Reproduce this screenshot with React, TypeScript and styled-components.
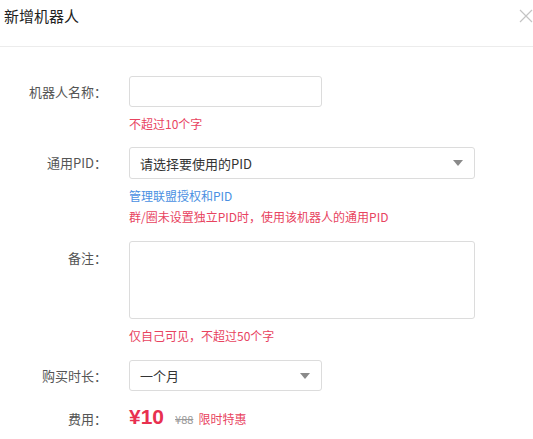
import React from "react";
import styled, { createGlobalStyle } from "styled-components";

const GlobalStyle = createGlobalStyle`
  body {
    margin: 0;
    background: #fff;
    font-family: "Noto Sans CJK SC", "Noto Sans", sans-serif;
    color: #333;
  }
`;

const Dialog = styled.div`
  width: 533px;
  height: 439px;
  overflow: hidden;
  background: #fff;
`;

const Header = styled.div`
  height: 47px;
  display: flex;
  align-items: flex-start;
  justify-content: space-between;
  border-bottom: 1px solid #ececec;
  padding-left: 4px;
  box-sizing: border-box;
`;

const Title = styled.h2`
  margin: 6px 0 0;
  font-size: 15px;
  line-height: 20px;
  font-weight: 400;
  color: #222;
`;

const CloseButton = styled.button`
  border: none;
  background: none;
  padding: 0;
  margin: 9px 0 0;
  width: 15px;
  height: 15px;
  cursor: pointer;
`;

const Body = styled.div`
  padding-top: 29px;
`;

const Field = styled.div<{ $gap: number }>`
  display: grid;
  grid-template-columns: 107px 1fr;
  column-gap: 22px;
  margin-bottom: ${(p) => p.$gap}px;
`;

const Label = styled.div<{ $h: number }>`
  text-align: right;
  font-size: 13px;
  line-height: ${(p) => p.$h}px;
  color: #555;
  white-space: nowrap;
`;

const Control = styled.div`
  display: flex;
  flex-direction: column;
  align-items: flex-start;
`;

const TextInput = styled.input<{ $w: number }>`
  width: ${(p) => p.$w}px;
  height: 31px;
  box-sizing: border-box;
  border: 1px solid #dcdcdc;
  border-radius: 3px;
  outline: none;
  padding: 0 9px;
  font: inherit;
  font-size: 13px;
`;

const TextArea = styled.textarea`
  width: 346px;
  height: 78px;
  box-sizing: border-box;
  border: 1px solid #dcdcdc;
  border-radius: 3px;
  outline: none;
  resize: none;
  padding: 6px 9px;
  font: inherit;
  font-size: 13px;
  display: block;
`;

const Select = styled.div<{ $w: number; $h: number }>`
  width: ${(p) => p.$w}px;
  height: ${(p) => p.$h}px;
  box-sizing: border-box;
  border: 1px solid #dcdcdc;
  border-radius: 3px;
  display: flex;
  align-items: center;
  justify-content: space-between;
  padding: 0 11px 0 10px;
  font-size: 13px;
  color: #333;
`;

const Arrow = styled.span`
  width: 0;
  height: 0;
  border-left: 5px solid transparent;
  border-right: 5px solid transparent;
  border-top: 6px solid #8a8a8a;
`;

const Hint = styled.div<{ $mt: number; $tone?: "red" | "blue" }>`
  margin-top: ${(p) => p.$mt}px;
  font-size: 12px;
  line-height: 18px;
  color: ${(p) => (p.$tone === "blue" ? "#4a90e2" : "#e8445f")};
  white-space: nowrap;
`;

const PriceRow = styled.div`
  display: flex;
  align-items: baseline;
  height: 28px;
`;

const Price = styled.span`
  font-family: "Liberation Sans", Arial, sans-serif;
  font-size: 21px;
  font-weight: 700;
  color: #e8304f;
  margin-right: 11px;
`;

const OldPrice = styled.span`
  font-size: 11px;
  color: #999;
  text-decoration: line-through;
  margin-right: 5px;
`;

const Promo = styled.span`
  font-size: 12px;
  color: #e8445f;
`;

export default function App() {
  return (
    <Dialog>
      <GlobalStyle />
      <Header>
        <Title>新增机器人</Title>
        <CloseButton aria-label="close">
          <svg width="14" height="14" viewBox="0 0 14 14">
            <path d="M1 1 L13 13 M13 1 L1 13" stroke="#c4c4c4" strokeWidth="1.2" fill="none" />
          </svg>
        </CloseButton>
      </Header>
      <Body>
        <Field $gap={14}>
          <Label $h={31}>机器人名称：</Label>
          <Control>
            <TextInput $w={193} />
            <Hint $mt={8}>不超过10个字</Hint>
          </Control>
        </Field>
        <Field $gap={15}>
          <Label $h={32}>通用PID：</Label>
          <Control>
            <Select $w={346} $h={32}>
              <span>请选择要使用的PID</span>
              <Arrow />
            </Select>
            <Hint $mt={8} $tone="blue">管理联盟授权和PID</Hint>
            <Hint $mt={3}>群/圈未设置独立PID时，使用该机器人的通用PID</Hint>
          </Control>
        </Field>
        <Field $gap={15}>
          <Label $h={34}>备注：</Label>
          <Control>
            <TextArea />
            <Hint $mt={8}>仅自己可见，不超过50个字</Hint>
          </Control>
        </Field>
        <Field $gap={14}>
          <Label $h={31}>购买时长：</Label>
          <Control>
            <Select $w={193} $h={31}>
              <span>一个月</span>
              <Arrow />
            </Select>
          </Control>
        </Field>
        <Field $gap={0}>
          <Label $h={28}>费用：</Label>
          <Control>
            <PriceRow>
              <Price>¥10</Price>
              <OldPrice>¥88</OldPrice>
              <Promo>限时特惠</Promo>
            </PriceRow>
          </Control>
        </Field>
      </Body>
    </Dialog>
  );
}
